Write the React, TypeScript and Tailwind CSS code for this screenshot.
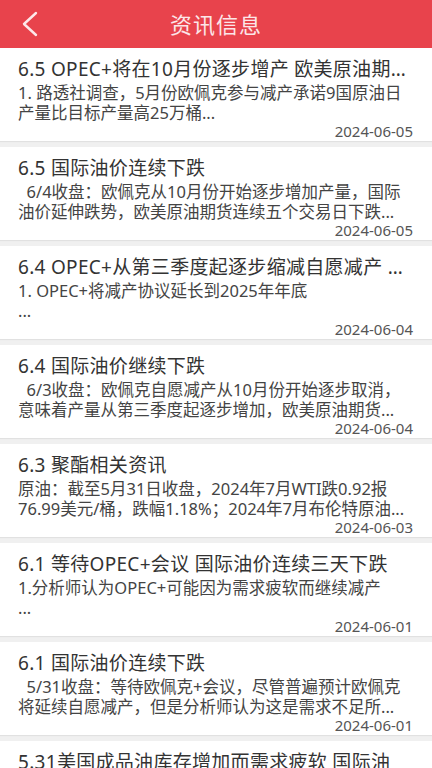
import React from "react";

type Item = { title: string; lines: string[]; date: string };

const items: Item[] = [
  {
    title: "6.5 OPEC+将在10月份逐步增产 欧美原油期…",
    lines: ["1. 路透社调查，5月份欧佩克参与减产承诺9国原油日", "产量比目标产量高25万桶..."],
    date: "2024-06-05",
  },
  {
    title: "6.5 国际油价连续下跌",
    lines: ["\u00a0\u00a06/4收盘：欧佩克从10月份开始逐步增加产量，国际", "油价延伸跌势，欧美原油期货连续五个交易日下跌..."],
    date: "2024-06-05",
  },
  {
    title: "6.4 OPEC+从第三季度起逐步缩减自愿减产 …",
    lines: ["1. OPEC+将减产协议延长到2025年年底", "..."],
    date: "2024-06-04",
  },
  {
    title: "6.4 国际油价继续下跌",
    lines: ["\u00a0\u00a06/3收盘：欧佩克自愿减产从10月份开始逐步取消，", "意味着产量从第三季度起逐步增加，欧美原油期货..."],
    date: "2024-06-04",
  },
  {
    title: "6.3 聚酯相关资讯",
    lines: ["原油：截至5月31日收盘，2024年7月WTI跌0.92报", "76.99美元/桶，跌幅1.18%；2024年7月布伦特原油..."],
    date: "2024-06-03",
  },
  {
    title: "6.1 等待OPEC+会议 国际油价连续三天下跌",
    lines: ["1.分析师认为OPEC+可能因为需求疲软而继续减产", "..."],
    date: "2024-06-01",
  },
  {
    title: "6.1 国际油价连续下跌",
    lines: ["\u00a0\u00a05/31收盘：等待欧佩克+会议，尽管普遍预计欧佩克", "将延续自愿减产，但是分析师认为这是需求不足所..."],
    date: "2024-06-01",
  },
  {
    title: "5.31美国成品油库存增加而需求疲软 国际油",
    lines: ["\u00a0\u00a05/30收盘：美国成品油库存增加，需求疲软，国际", "油价下跌..."],
    date: "2024-05-31",
  },
];

export default function App() {
  return (
    <div
      className="w-[432px] min-h-[768px] bg-[#f0f0f0]"
      style={{ fontFamily: '"Noto Sans", "Noto Sans CJK SC", sans-serif' }}
    >
      <div className="relative h-12 bg-[#e8434c] flex items-center justify-center">
        <svg
          className="absolute left-[20px] top-[11px]"
          width="20"
          height="26"
          viewBox="0 0 20 26"
          fill="none"
        >
          <path d="M16 2 L4 13 L16 24" stroke="#fde8ea" strokeWidth="2.4" strokeLinecap="round" strokeLinejoin="round" />
        </svg>
        <span className="text-[22px] tracking-[1px] text-[#fce6e8]">资讯信息</span>
      </div>
      <div className="flex flex-col gap-[6px]">
        {items.map((it, i) => (
          <div key={i} className="bg-white pl-[18px] pr-[19px] pt-[7px] pb-[2px] shadow-[0_1px_1px_rgba(0,0,0,0.06)]">
            <div className="text-[19px] leading-[28px] tracking-[0.3px] text-[#333] whitespace-nowrap overflow-hidden">
              {it.title}
            </div>
            {it.lines.map((l, j) => (
              <div key={j} className="text-[16.5px] leading-[20px] text-[#444] whitespace-nowrap">
                {l}
              </div>
            ))}
            <div className="text-[15px] leading-[16px] text-[#555] text-right">{it.date}</div>
          </div>
        ))}
      </div>
    </div>
  );
}
